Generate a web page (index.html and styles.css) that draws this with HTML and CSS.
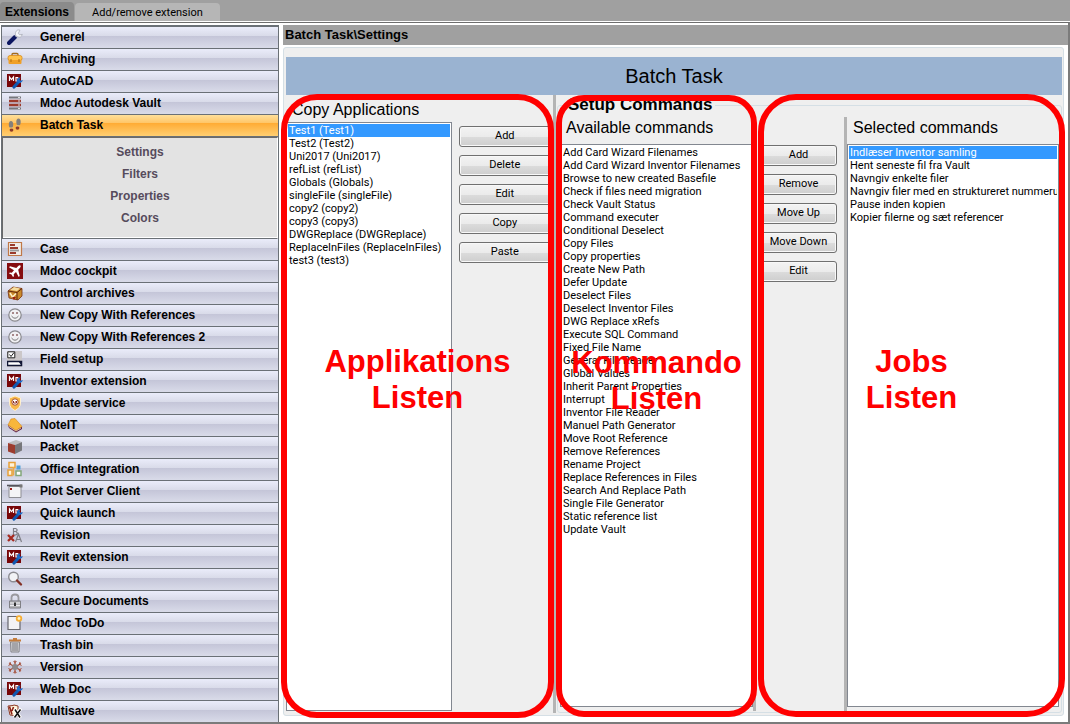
FILE: index.html
```html
<!DOCTYPE html>
<html lang="en">
<head>
<meta charset="utf-8">
<title>Batch Task\Settings</title>
<link rel="stylesheet" href="styles.css">
</head>
<body>
<svg class="sprite" aria-hidden="true">
  <symbol id="i-wrench" viewBox="0 0 16 16"><path d="M2 14 8 8" stroke="#0b1560" stroke-width="4" stroke-linecap="round"/><path d="M8.500 7.500 11 5" stroke="#b9bcc6" stroke-width="2.500"/><path d="M13 1.200a3.500 3.500 0 1 0 2.300 4.200l-2.800.4-1.200-1.600z" fill="#f4f5fa" stroke="#9a9da8" stroke-width=".6"/></symbol>
  <symbol id="i-case" viewBox="0 0 16 16"><path d="M5 5V3.500q0-1 1-1h4q1 0 1 1V5" fill="none" stroke="#a36a1c" stroke-width="1.300"/><rect x="1" y="4.500" width="14" height="5" rx="2" fill="#ffc24a" stroke="#d98a1a" stroke-width=".8"/><path d="M1.500 9h13v3q0 1-1 1h-11q-1 0-1-1z" fill="#f0a028"/><path d="M4 8v3M12 8v3" stroke="#b06d10"/></symbol>
  <symbol id="i-md" viewBox="0 0 16 16"><path d="M0 1h14v13H0z" fill="#780608"/><path d="M2.500 8V4l2 2.500 2-2.500v4M9 4.500V8h1.500q2-1.700 0-3.500z" fill="none" stroke="#fff" stroke-width="1.200"/><path d="m7 14 4.500-5" stroke="#1058b0" stroke-width="3.200" stroke-linecap="round"/><path d="m15.800 7-2.300.8-1-1 1-2.300a3.400 3.400 0 0 0-3.500 4.500 3.400 3.400 0 0 0 5.800-2z" fill="#1c6ac8"/></symbol>
  <symbol id="i-vault" viewBox="0 0 16 16"><path d="M2 2.500h12M2 13.500h12" stroke="#77777c" stroke-width="2"/><path d="M2 6h12M2 10h12" stroke="#9c3a2c" stroke-width="2.400"/><path d="M11 2.500h2M11 6h2M11 10h2M11 13.500h2" stroke="#ddd"/></symbol>
  <symbol id="i-feet" viewBox="0 0 16 16"><ellipse cx="4" cy="7.500" rx="2.200" ry="3.500" fill="#85807c"/><ellipse cx="4.500" cy="13" rx="1.900" ry="1.700" fill="#8f3a28"/><ellipse cx="11.500" cy="5" rx="2.200" ry="3.500" fill="#85807c"/><ellipse cx="10.500" cy="11" rx="1.900" ry="1.700" fill="#8f3a28"/><path d="M2.500 11h3.500M9 8.800h3.500" stroke="#e9c17b"/></symbol>
  <symbol id="i-doc" viewBox="0 0 16 16"><path d="M1.500 1.500h13v13h-13z" fill="#f1ece8" stroke="#c07848" stroke-width="1.200"/><path d="M3 4h5M3 7h8M3 12h6" stroke="#9b3a2c" stroke-width="1.800"/><path d="M3 9.500h9" stroke="#999" stroke-width="1.800"/></symbol>
  <symbol id="i-plane" viewBox="0 0 16 16"><path d="M0 0h16v16H0z" fill="#850c10"/><path d="M13.500 2.500q-1-.8-2 .2L9.300 5 3 3.300 2 4.300l5 3-2.200 2.500-2-.3-.8.900 2.500 1.200L6 14l1-.8-.3-2L9 9l2.700 5 1-1-1.500-6.300 2-2.200q.8-1 .3-2z" fill="#fff"/></symbol>
  <symbol id="i-box" viewBox="0 0 16 16"><path d="m1 6 5-4 9 1.500V11l-4 4-9-2z" fill="#c98a2c" stroke="#7a3210" stroke-width=".8"/><path d="m1 6 9 1.500L15 3.500M10 7.500V15" fill="none" stroke="#63260c"/><path d="m3 5 4-3 6 1.500L10 6z" fill="#f6dca0"/><path d="m3 8 2.500 4L9 8.500" fill="none" stroke="#fff0c8" stroke-width="1.500"/><path d="m5 12 2 3 2-3z" fill="#9c1d10"/></symbol>
  <symbol id="i-smile" viewBox="0 0 16 16"><circle cx="8" cy="8" r="6.200" fill="#f1f1f3" stroke="#88888d" stroke-width="1.200"/><path d="M6 5v2M10 5v2" stroke="#744" stroke-width="1.200"/><path d="M4.500 9q3.500 4.500 7 0" fill="none" stroke="#777"/></symbol>
  <symbol id="i-field" viewBox="0 0 16 16"><path d="M0 0h15v16H0z" fill="#cbc7c9"/><path d="M.8.800h7v6h-7z" fill="#fff" stroke="#222"/><path d="m2.500 3.500 1.500 2 3-4" fill="none" stroke="#222"/><path d="M.5 10.500h14v4H.5z" fill="#fff" stroke="#111635" stroke-width="1.500"/><path d="M11 10h4v5z" fill="#111635"/></symbol>
  <symbol id="i-shield" viewBox="0 0 16 16"><path d="M8 1 13.500 3v5q0 5-5.500 7.500Q2.500 13 2.500 8V3z" fill="#f8b84a" stroke="#fff0cf"/><circle cx="8" cy="7" r="3.200" fill="#fff" stroke="#a8502c"/><path d="M6.500 6v2h3V6l-1 1" fill="none" stroke="#8d2d20"/></symbol>
  <symbol id="i-note" viewBox="0 0 16 16"><path d="m1 8 1 3 7 4.500 6-3.500v-2z" fill="#632348"/><path d="m1 8 3-6 4-.5L15 9.500l-6 4z" fill="#f8b63c" stroke="#d68718" stroke-width=".6"/><path d="m2 9.500 7 4.500 5-3" fill="none" stroke="#f0ddb0" stroke-width=".8"/></symbol>
  <symbol id="i-packet" viewBox="0 0 16 16"><path d="m1 4 8-3 6 2-7 3z" fill="#bcbcbf"/><path d="m1 4 7 2v9l-7-2.500z" fill="#9c3c2e"/><path d="m8 6 7-3v8.500L8 15z" fill="#77777b"/></symbol>
  <symbol id="i-office" viewBox="0 0 16 16"><path d="M2 1.500h6v5H2zM1 9h4v5.500H1z" fill="#fff3d8" stroke="#e7a13a" stroke-width="1.500"/><path d="M9.500 4.500h4v4h-4z" fill="#51a0d8"/><path d="M9 10h5v4.500H9z" fill="#fff" stroke="#83a77a" stroke-width="1.500"/><path d="M6.500 6v8.500" stroke="#edaa43" stroke-width="1.500"/></symbol>
  <symbol id="i-plot" viewBox="0 0 16 16"><path d="M2 3.500h12v11H2z" fill="#f4f4f6" stroke="#8e8e93"/><path d="M0 2.500h15" stroke="#55555c" stroke-width="1.600"/><path d="M12.500 1.500h3v3h-3z" fill="#777"/><path d="M3 5h2v2H3z" fill="#a0201c"/></symbol>
  <symbol id="i-rev" viewBox="0 0 16 16"><path d="M6.500 8V1.500h2.200q3 1.500 0 3H7m1.700 0q3.300 1.700 0 3.500H6.500M8.500 15l3-8 3 8M9.500 12.500h4" fill="none" stroke="#7f7f87" stroke-width="1.200"/><path d="m1 8 6 6M7 8l-6 6" stroke="#a62a20" stroke-width="2.300"/></symbol>
  <symbol id="i-search" viewBox="0 0 16 16"><circle cx="6.500" cy="6" r="4.800" fill="#f1f2f6" stroke="#8c8c92" stroke-width="1.400"/><path d="m10 9.500 4 4" stroke="#833024" stroke-width="2.400" stroke-linecap="round"/></symbol>
  <symbol id="i-lock" viewBox="0 0 16 16"><path d="M4.500 8V4.500q0-3 3.500-3t3.500 3V8" fill="none" stroke="#99999e" stroke-width="1.800"/><path d="M2.500 8h11v7h-11z" fill="#b7b7ba" stroke="#808085"/><path d="M3 10h10M3 12.500h10" stroke="#ececef"/><path d="M7 9.500h2v3.500H7z" fill="#333"/></symbol>
  <symbol id="i-todo" viewBox="0 0 16 16"><path d="M1 1.500h12v13H1z" fill="#f3f3f5" stroke="#68686e" stroke-width="1.200"/><circle cx="12" cy="3.500" r="3.200" fill="#f5ad35"/><circle cx="12" cy="3.500" r="1.400" fill="#fff4c0"/></symbol>
  <symbol id="i-trash" viewBox="0 0 16 16"><path d="M3.500 5h9l-.5 10H4z" fill="#d2d2d5" stroke="#85858a"/><path d="M6 6v8M8 6v8M10 6v8" stroke="#77777c"/><path d="M2 3.500h12M6 2h4" stroke="#c47c3b" stroke-width="1.800"/></symbol>
  <symbol id="i-version" viewBox="0 0 16 16"><path d="M8 1.500v13M2 4.500l12 7M14 4.500l-12 7" stroke="#a95039" stroke-width="1.300"/><circle cx="8" cy="8" r="3" fill="#8e8a8c"/><path d="m6.500 2 1.500 1.500L9.500 2M6.500 14 8 12.500 9.500 14M1.500 6.500l2-1.200L3 3M14.500 6.500l-2-1.200L13 3M1.500 9.500l2 1.200L3 13M14.500 9.500l-2 1.200L13 13" fill="none" stroke="#a04a35"/></symbol>
  <symbol id="i-multi" viewBox="0 0 16 16"><path d="m1 3 5-.5L7 2l4 1v10l-8-1z" fill="#fff7dd" stroke="#8d3a25"/><path d="m2.500 3.500 2.500 8M6.500 4 5 8" stroke="#8d1f16" stroke-width="1.600"/><path d="m7.500 6 6 9M14 5.500l-7 9" stroke="#fff" stroke-width="3.200"/><path d="m8 6.500 5 8M13.500 6.500l-6 8" stroke="#111" stroke-width="1.500"/></symbol>
</svg>

<div class="app">
  <div class="tabs" role="tablist">
    <button class="tab tab-active" role="tab" aria-selected="true">Extensions</button>
    <button class="tab" role="tab" aria-selected="false">Add/remove extension</button>
  </div>

  <div class="body">
    <nav class="sidebar" aria-label="Extensions">
      <button class="item"><svg class="icon"><use href="#i-wrench"/></svg>Generel</button>
      <button class="item"><svg class="icon"><use href="#i-case"/></svg>Archiving</button>
      <button class="item"><svg class="icon"><use href="#i-md"/></svg>AutoCAD</button>
      <button class="item"><svg class="icon"><use href="#i-vault"/></svg>Mdoc Autodesk Vault</button>
      <button class="item item-open" aria-expanded="true"><svg class="icon"><use href="#i-feet"/></svg>Batch Task</button>
      <div class="submenu">
        <a href="#settings">Settings</a>
        <a href="#filters">Filters</a>
        <a href="#properties">Properties</a>
        <a href="#colors">Colors</a>
      </div>
      <button class="item"><svg class="icon"><use href="#i-doc"/></svg>Case</button>
      <button class="item"><svg class="icon"><use href="#i-plane"/></svg>Mdoc cockpit</button>
      <button class="item"><svg class="icon"><use href="#i-box"/></svg>Control archives</button>
      <button class="item"><svg class="icon"><use href="#i-smile"/></svg>New Copy With References</button>
      <button class="item"><svg class="icon"><use href="#i-smile"/></svg>New Copy With References 2</button>
      <button class="item"><svg class="icon"><use href="#i-field"/></svg>Field setup</button>
      <button class="item"><svg class="icon"><use href="#i-md"/></svg>Inventor extension</button>
      <button class="item"><svg class="icon"><use href="#i-shield"/></svg>Update service</button>
      <button class="item"><svg class="icon"><use href="#i-note"/></svg>NoteIT</button>
      <button class="item"><svg class="icon"><use href="#i-packet"/></svg>Packet</button>
      <button class="item"><svg class="icon"><use href="#i-office"/></svg>Office Integration</button>
      <button class="item"><svg class="icon"><use href="#i-plot"/></svg>Plot Server Client</button>
      <button class="item"><svg class="icon"><use href="#i-md"/></svg>Quick launch</button>
      <button class="item"><svg class="icon"><use href="#i-rev"/></svg>Revision</button>
      <button class="item"><svg class="icon"><use href="#i-md"/></svg>Revit extension</button>
      <button class="item"><svg class="icon"><use href="#i-search"/></svg>Search</button>
      <button class="item"><svg class="icon"><use href="#i-lock"/></svg>Secure Documents</button>
      <button class="item"><svg class="icon"><use href="#i-todo"/></svg>Mdoc ToDo</button>
      <button class="item"><svg class="icon"><use href="#i-trash"/></svg>Trash bin</button>
      <button class="item"><svg class="icon"><use href="#i-version"/></svg>Version</button>
      <button class="item"><svg class="icon"><use href="#i-md"/></svg>Web Doc</button>
      <button class="item"><svg class="icon"><use href="#i-multi"/></svg>Multisave</button>
    </nav>

    <main class="main">
      <h1 class="path">Batch Task\Settings</h1>
      <div class="group">
        <h2 class="banner">Batch Task</h2>
        <div class="panes">
          <section class="pane pane-copy">
            <div class="column column-copy">
              <label class="caption" for="apps">Copy Applications</label>
              <select class="list" id="apps" size="11">
                <option selected>Test1 (Test1)</option>
                <option>Test2 (Test2)</option>
                <option>Uni2017 (Uni2017)</option>
                <option>refList (refList)</option>
                <option>Globals (Globals)</option>
                <option>singleFile (singleFile)</option>
                <option>copy2 (copy2)</option>
                <option>copy3 (copy3)</option>
                <option>DWGReplace (DWGReplace)</option>
                <option>ReplaceInFiles (ReplaceInFiles)</option>
                <option>test3 (test3)</option>
              </select>
            </div>
            <div class="actions">
              <button class="btn">Add</button>
              <button class="btn">Delete</button>
              <button class="btn">Edit</button>
              <button class="btn">Copy</button>
              <button class="btn">Paste</button>
            </div>
            <div class="mark mark-copy"><span>Applikations<br>Listen</span></div>
          </section>
          <div class="splitter"></div>
          <fieldset class="setup">
            <legend class="legend">Setup Commands</legend>
            <div class="setup-panes">
              <section class="pane pane-available">
                <div class="column">
                  <label class="caption" for="available">Available commands</label>
                  <select class="list" id="available" size="30">
                    <option>Add Card Wizard Filenames</option>
                    <option>Add Card Wizard Inventor Filenames</option>
                    <option>Browse to new created Basefile</option>
                    <option>Check if files need migration</option>
                    <option>Check Vault Status</option>
                    <option>Command executer</option>
                    <option>Conditional Deselect</option>
                    <option>Copy Files</option>
                    <option>Copy properties</option>
                    <option>Create New Path</option>
                    <option>Defer Update</option>
                    <option>Deselect Files</option>
                    <option>Deselect Inventor Files</option>
                    <option>DWG Replace xRefs</option>
                    <option>Execute SQL Command</option>
                    <option>Fixed File Name</option>
                    <option>General File Reader</option>
                    <option>Global Values</option>
                    <option>Inherit Parent Properties</option>
                    <option>Interrupt</option>
                    <option>Inventor File Reader</option>
                    <option>Manuel Path Generator</option>
                    <option>Move Root Reference</option>
                    <option>Remove References</option>
                    <option>Rename Project</option>
                    <option>Replace References in Files</option>
                    <option>Search And Replace Path</option>
                    <option>Single File Generator</option>
                    <option>Static reference list</option>
                    <option>Update Vault</option>
                  </select>
                </div>
                <div class="mark mark-available"><span>Kommando<br>Listen</span></div>
              </section>
              <div class="splitter"></div>
              <section class="pane pane-selected">
                <div class="actions">
                  <button class="btn">Add</button>
                  <button class="btn">Remove</button>
                  <button class="btn">Move Up</button>
                  <button class="btn">Move Down</button>
                  <button class="btn">Edit</button>
                </div>
                <div class="splitter"></div>
                <div class="column">
                  <label class="caption" for="chosen">Selected commands</label>
                  <select class="list" id="chosen" size="6">
                    <option selected>Indlæser Inventor samling</option>
                    <option>Hent seneste fil fra Vault</option>
                    <option>Navngiv enkelte filer</option>
                    <option>Navngiv filer med en struktureret nummerudtrykning</option>
                    <option>Pause inden kopien</option>
                    <option>Kopier filerne og sæt referencer</option>
                  </select>
                </div>
                <div class="mark mark-selected"><span>Jobs<br>Listen</span></div>
              </section>
            </div>
          </fieldset>
        </div>
      </div>
    </main>
  </div>
</div>
</body>
</html>
```
FILE: styles.css
```css
* { box-sizing: border-box; }

body {
  margin: 0;
  background: #fff;
  color: #000;
  font-family: "Liberation Sans", Arial, sans-serif;
  font-size: 11px;
}

button, select { font: inherit; color: inherit; }

.sprite { position: absolute; width: 0; height: 0; }

.app {
  display: flex;
  flex-direction: column;
  min-height: 100vh;
  border-bottom: 2px solid #7b7b7b;
}

/* top tabs */
.tabs {
  display: flex;
  align-items: flex-end;
  gap: 1px;
  height: 21px;
  background: #a0a0a0;
}

.tab {
  height: 18px;
  padding: 0 17px;
  border: 0;
  border-radius: 4px 4px 0 0;
  background: #b6b6b6;
  font-family: Roboto, "Liberation Sans", sans-serif;
  font-size: 11px;
}

.tab-active {
  height: 19px;
  padding: 0 5px;
  background: #8b8b8b;
  font-family: "Liberation Sans", Arial, sans-serif;
  font-size: 12px;
  font-weight: bold;
}

.body {
  flex: 1;
  display: flex;
  gap: 4px;
  margin-top: 1px;
  padding: 2px 0 0 1px;
  border-top: 1px solid #6d6d6d;
  border-right: 2px solid #7b7b7b;
}

/* left navigation */
.sidebar {
  flex: 0 0 278px;
  display: flex;
  flex-direction: column;
  border: 1px solid #6a7076;
  border-top-width: 2px;
  border-bottom: 0;
}

.item {
  display: flex;
  align-items: center;
  gap: 17px;
  height: 22px;
  padding: 0 5px 2px;
  border: 0;
  border-bottom: 1px solid #6a7076;
  background: linear-gradient(#eaecfa, #d9dbe9 42%, #c4c5d8 43%, #d9dbe9);
  font-size: 12px;
  font-weight: bold;
  text-align: left;
}

.item:last-child { height: 21px; border-bottom: 0; }

.item-open {
  background: linear-gradient(#ffdf9a, #ffc76a 36%, #ffac35 40%, #ffcf72);
}

.icon { flex: none; width: 16px; height: 16px; fill: none; }

.submenu {
  display: flex;
  flex-direction: column;
  height: 102px;
  padding-top: 3px;
  border-top: 1px solid #6a6a6a;
  border-left: 1px solid #6a6a6a;
  border-right: 1px solid #fff;
  border-bottom: 1px solid #6a7076;
  box-shadow: inset 0 -1px #fff;
  background: #e3e3e3;
}

.submenu a {
  color: #564b5c;
  font-size: 12px;
  font-weight: bold;
  line-height: 22px;
  text-align: center;
  text-decoration: none;
}

/* right side */
.main {
  flex: 1;
  min-width: 0;
  display: flex;
  flex-direction: column;
}

.path {
  margin: 0;
  padding: 0 2px;
  background: #a0a0a0;
  font-size: 13px;
  line-height: 20px;
}

.group {
  flex: 1;
  display: flex;
  flex-direction: column;
  margin: 2px 4px 6px 0;
  padding: 9px 1px 2px 2px;
  border: 1px solid #d5dfe5;
  border-radius: 3px;
  background: #efefef;
}

.banner {
  margin: 0;
  background: #9ab3d1;
  font-size: 20px;
  font-weight: normal;
  line-height: 38px;
  text-align: center;
}

.panes, .setup-panes { flex: 1; display: flex; min-height: 0; }

.splitter { flex: 0 0 3px; background: #b4b4b4; }

.pane { position: relative; display: flex; min-width: 0; }
.pane-copy { flex: 267; }
.pane-available { flex: 193; }
.pane-selected { flex: 303; }

.column { flex: 1; min-width: 0; display: flex; flex-direction: column; }
.column-copy { flex: 0 0 62%; }

.caption {
  padding: 0 6px 5px;
  font-size: 16px;
  line-height: 22px;
}

.column-copy .caption { padding: 4px 6px 1px; }

.list {
  flex: 1;
  width: 100%;
  margin-bottom: 4px;
  padding: 1px;
  border: 1px solid #828790;
  border-radius: 0;
  outline: 0;
  background: #fff;
  overflow: hidden;
}

.column-copy .list { margin-bottom: 2px; }

.list option {
  height: 13px;
  min-height: 13px;
  padding: 0 1px;
  font-family: Roboto, "Liberation Sans", sans-serif;
  font-size: 11px;
  line-height: 13px;
  overflow: hidden;
}

.list option:checked {
  background: #3399ff linear-gradient(#3399ff, #3399ff);
  color: #fff;
}

.actions {
  display: flex;
  flex-direction: column;
  gap: 8px;
}

.pane-copy .actions { flex: 1; padding: 31px 2px 0 7px; }
.pane-selected .actions { flex: 0 0 88px; padding: 28px 7px 0 4px; }

.btn {
  height: 21px;
  padding: 0 0 2px;
  border: 1px solid #707070;
  border-radius: 3px;
  background: linear-gradient(#f3f3f3, #ebebeb 50%, #dcdcdc 51%, #cecece);
  box-shadow: inset 0 0 0 1px #f8f8f8;
  font-family: Roboto, "Liberation Sans", sans-serif;
}

.setup {
  flex: 499;
  display: flex;
  flex-direction: column;
  min-width: 0;
  margin: 1px 0 0 1px;
  padding: 3px 2px 1px;
  border: 1px solid #d5dfe5;
  border-radius: 3px;
}

.legend {
  margin-left: 6px;
  padding: 0 2px;
  font-size: 17px;
  font-weight: bold;
  line-height: 18px;
}

.setup-panes { height: 100%; }

/* red outlines laid over the three areas */
.mark {
  position: absolute;
  z-index: 1;
  display: flex;
  justify-content: center;
  border: 6px solid #f00;
  color: #f00;
  font-size: 31px;
  font-weight: bold;
  line-height: 36px;
  text-align: center;
  pointer-events: none;
}

.mark span { margin-top: 244px; }
.mark-copy { inset: -1px -1px -5px -5px; border-radius: 36px; }
.mark-available { inset: -22px -4px -6px -4px; border-radius: 28px; }
.mark-selected { inset: -23px -6px -6px 2px; border-radius: 38px; }
```
